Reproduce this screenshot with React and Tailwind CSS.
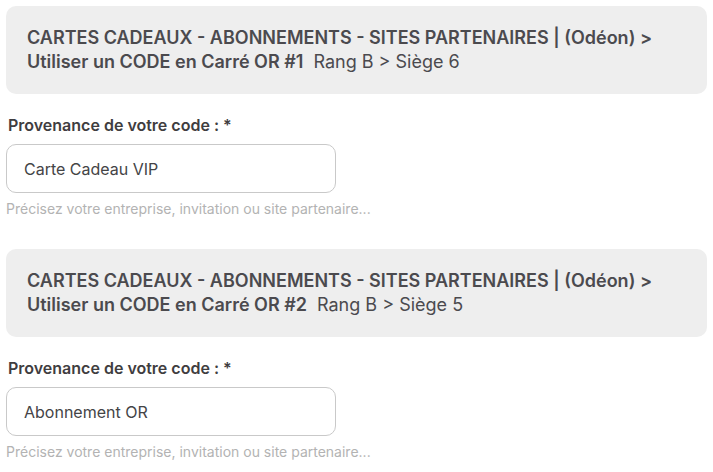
const seats = [
  { n: 1, seat: 'Rang B > Siège 6', value: 'Carte Cadeau VIP' },
  { n: 2, seat: 'Rang B > Siège 5', value: 'Abonnement OR' },
];

// ─── One ticket block ───────────────────────────────────────────────────────

function SeatBlock({ n, seat, value }) {
  return (
    <div>
      <div className="bg-[#eeeeee] rounded-[10px] px-[21px] py-[20px] h-[88px]">
        <p className="text-[18px] leading-[24px] font-semibold text-[#4b4a4e]">
          CARTES CADEAUX - ABONNEMENTS - SITES PARTENAIRES | (Odéon) &gt;
          <br />
          Utiliser un CODE en Carré OR #{n}
          <span className="font-normal ml-[10px]">{seat}</span>
        </p>
      </div>

      <label className="block mt-[21px] ml-[2px] text-[16px] leading-[20px] font-semibold text-[#3f3d40]">
        Provenance de votre code : *
      </label>
      <input
        type="text"
        defaultValue={value}
        className="mt-[9px] w-[330px] h-[49px] rounded-[10px] border border-[#c9c9c9] bg-white px-[17px] text-[16px] text-[#444446] outline-none"
      />
      <p className="mt-[7px] text-[14px] leading-[18px] text-[#b3b3b3]">
        Précisez votre entreprise, invitation ou site partenaire...
      </p>
    </div>
  );
}

export default function App() {
  return (
    <div
      className="bg-white min-h-screen px-[6px] pt-[6px] flex flex-col gap-[31px] w-[713px]"
      style={{ fontFamily: 'Inter, "Noto Sans", sans-serif' }}
    >
      {seats.map(s => (
        <SeatBlock key={s.n} {...s} />
      ))}
    </div>
  );
}
